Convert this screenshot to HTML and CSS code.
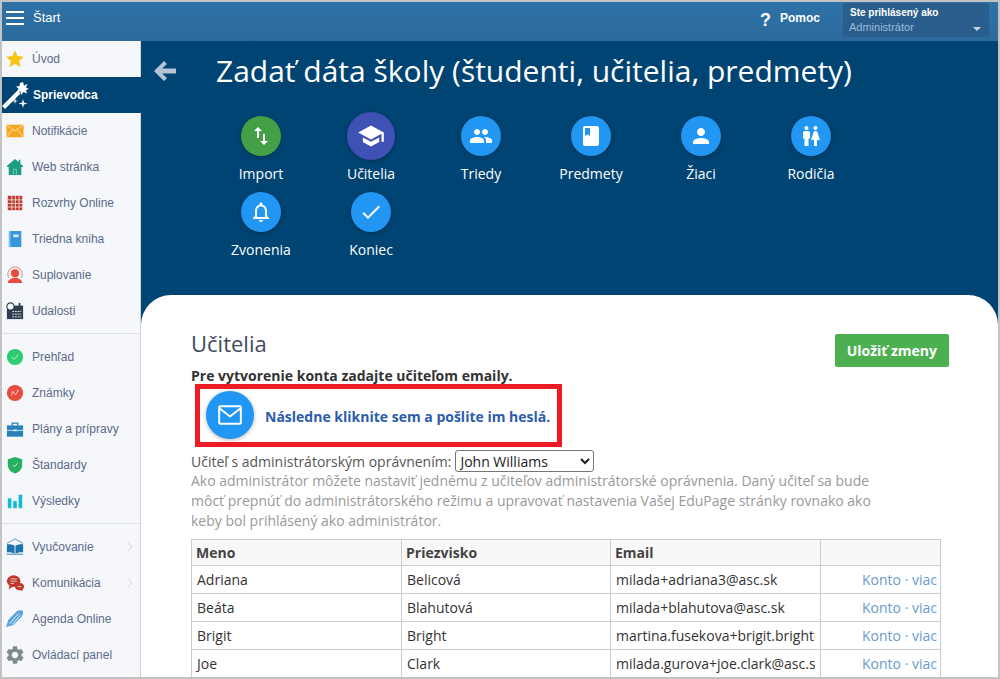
FILE: index.html
```html
<!DOCTYPE html>
<html lang="en">
<head>
    <meta charset="UTF-8">
    <meta name="viewport" content="width=device-width, initial-scale=1.0">
    <title>Zadať dáta školy</title>
    <link rel="stylesheet" href="styles.css">
</head>
<body>
    <div class="frame">
        <header class="topbar">
            <div class="hamburger"><span></span><span></span><span></span></div>
            <div class="topbar-title">Štart</div>
            <div class="help-mark">?</div>
            <div class="help-label">Pomoc</div>
            <div class="user-box">
                <div class="user-caption">Ste prihlásený ako</div>
                <div class="user-role">Administrátor<span class="caret"></span></div>
            </div>
        </header>

        <div class="layout">
            <nav class="sidebar">
                <a class="side-item">
                    <svg class="side-icon" viewBox="0 0 20 20"><polygon fill="#f6c514" points="10,0.500 12.900,6.800 19.800,7.500 14.600,12.100 16.100,19 10,15.400 3.900,19 5.400,12.100 0.200,7.500 7.100,6.800"/></svg>
                    Úvod
                </a>
                <a class="side-item side-item-active">
                    <svg class="side-icon-wand" viewBox="0 0 27 27"><path fill="#fff" d="M0 24L15.500 8.500l3 3L3 27z"/><path fill="#fff" d="M21 0l1 3.500 3.500-1.500-1.500 3.500 3 1.500-3 1 1 3.500-3.500-1.500L19 13l-.5-3.500-3.500.5 1.500-3.500L14 4.500l3.500-.5L18 1z"/><path fill="#fff" d="M21 17l.9 3.600 3.600.9-3.600.9L21 26l-.9-3.600-3.600-.9 3.600-.9zM13 16l.6 2.400 2.400.6-2.400.6L13 22l-.6-2.400L10 19l2.400-.6z"/></svg>
                    Sprievodca
                </a>
                <a class="side-item">
                    <svg class="side-icon" viewBox="0 0 20 20"><rect x="0.500" y="3" width="19" height="14" fill="#f5a623"/><path fill="none" stroke="#fde3ac" stroke-width="1" d="M0.500 3l9.500 7 9.500-7M0.500 17l7-8.500M19.500 17l-7-8.500"/></svg>
                    Notifikácie
                </a>
                <a class="side-item">
                    <svg class="side-icon" viewBox="0 0 20 20"><path fill="#1f9c86" d="M10 1L1 9v1h2v9h14v-9h2V9l-3-2.700V2h-2v2.500z"/><rect x="8" y="12" width="4" height="7" fill="#7cc8ba"/><rect x="9" y="13" width="2" height="6" fill="#1f9c86"/></svg>
                    Web stránka
                </a>
                <a class="side-item">
                    <svg class="side-icon" viewBox="0 0 20 20"><rect x="2" y="2" width="16" height="16" fill="#c0392b"/><path fill="none" stroke="#f3d6d2" stroke-width="1" d="M2 6.500h16M2 10.500h16M2 14.500h16M6.500 2v16M10.500 2v16M14.500 2v16"/></svg>
                    Rozvrhy Online
                </a>
                <a class="side-item">
                    <svg class="side-icon" viewBox="0 0 20 20"><rect x="4" y="1" width="13" height="18" rx="1" fill="#3498db"/><rect x="3" y="1" width="2" height="18" fill="#7fbfe9"/><rect x="8" y="5" width="6" height="3" fill="#d6ecfa"/></svg>
                    Triedna kniha
                </a>
                <a class="side-item">
                    <svg class="side-icon" viewBox="0 0 20 20"><path fill="none" stroke="#e9725f" stroke-width="1" d="M3 13a8 8 0 1 1 14 0"/><circle cx="10" cy="8" r="4.500" fill="#e74c3c"/><path fill="#e74c3c" d="M2 19c0-4 4-5 6-6h4c2 1 6 2 6 6z"/></svg>
                    Suplovanie
                </a>
                <a class="side-item">
                    <svg class="side-icon" viewBox="0 0 20 20"><rect x="1" y="4" width="18" height="15" fill="#2c3e50"/><path stroke="#fff" stroke-width="1" stroke-dasharray="2 1" d="M7 10.500h10M7 13.500h10M7 16.500h10"/><circle cx="5" cy="5" r="4" fill="#f5f7fa" stroke="#2c3e50" stroke-width="1.200"/><rect x="14" y="1" width="2" height="4" fill="#2c3e50"/></svg>
                    Udalosti
                </a>
                <div class="side-sep"></div>
                <a class="side-item">
                    <svg class="side-icon" viewBox="0 0 20 20"><circle cx="10" cy="10" r="9" fill="#2ecc71"/><path fill="none" stroke="#d5f5e3" stroke-width="1" d="M6.500 10l2.500 2.800 4.500-5.300"/></svg>
                    Prehľad
                </a>
                <a class="side-item">
                    <svg class="side-icon" viewBox="0 0 20 20"><circle cx="10" cy="10" r="9" fill="#e74c3c"/><path fill="none" stroke="#f9d6d2" stroke-width="1" d="M6 13l1.500-5 3 4 3-4.500M12 6.500l2 1"/></svg>
                    Známky
                </a>
                <a class="side-item">
                    <svg class="side-icon" viewBox="0 0 20 20"><path fill="#2980b9" d="M1 6h18v12.500H1z"/><path fill="none" stroke="#2980b9" stroke-width="1.500" d="M7 6V3.500h6V6"/><path stroke="#d6e9f5" stroke-width="1" d="M1 11.500h7M12 11.500h7"/><rect x="8" y="10.500" width="4" height="2" fill="#d6e9f5"/></svg>
                    Plány a prípravy
                </a>
                <a class="side-item">
                    <svg class="side-icon" viewBox="0 0 20 20"><path fill="#27ae60" d="M10 1l8 2.500V10c0 5-4 8-8 9.500C6 18 2 15 2 10V3.500z"/><path fill="none" stroke="#d5f5e3" stroke-width="1" d="M7.500 10l2 2 3.500-4"/></svg>
                    Štandardy
                </a>
                <a class="side-item">
                    <svg class="side-icon" viewBox="0 0 20 20"><rect x="2" y="7" width="4" height="11" fill="#13bcd4"/><rect x="8" y="10" width="4" height="8" fill="#13bcd4"/><rect x="14" y="3" width="4" height="15" fill="#13bcd4"/></svg>
                    Výsledky
                </a>
                <div class="side-sep"></div>
                <a class="side-item side-item-more">
                    <svg class="side-icon" viewBox="0 0 20 20"><path fill="none" stroke="#4b90c4" stroke-width="1" d="M1 6l9-5 9 5"/><path fill="#2273ad" d="M1 7c3-.5 6 0 8.500 1.500v9C7 16 4 15.500 1 16zM19 7c-3-.5-6 0-8.500 1.500v9c2.500-1.500 5.500-2 8.500-1.500z"/><path stroke="#2273ad" stroke-width="1" d="M1 18h18"/></svg>
                    Vyučovanie
                    <svg class="side-arrow" viewBox="0 0 6 10"><path fill="none" stroke="#cfd4da" stroke-width="1" d="M.5.5L5 5 .5 9.500"/></svg>
                </a>
                <a class="side-item side-item-more">
                    <svg class="side-icon" viewBox="0 0 20 20"><ellipse cx="8.500" cy="8" rx="7.500" ry="6.500" fill="#c0392b"/><path fill="#c0392b" d="M4 12l-1 5 5-3z"/><ellipse cx="15" cy="14" rx="5" ry="4" fill="#c0392b"/><path fill="#c0392b" d="M17 16l2 3-5-1.500z"/><path stroke="#f5d5d1" stroke-width="1" d="M5 5.500h7M5 8h7M5 10.500h4M13 14h4"/></svg>
                    Komunikácia
                    <svg class="side-arrow" viewBox="0 0 6 10"><path fill="none" stroke="#cfd4da" stroke-width="1" d="M.5.5L5 5 .5 9.500"/></svg>
                </a>
                <a class="side-item">
                    <svg class="side-icon" viewBox="0 0 20 20"><path fill="#5aa5de" d="M0 19l2.500-8L12 1.500c2-1.500 6-1.500 7 0 .5 2-.5 5-2 6.500l-9 9z"/><path fill="none" stroke="#f5f7fa" stroke-width="1" d="M4 15L14 4M7 16l9-10"/></svg>
                    Agenda Online
                </a>
                <a class="side-item">
                    <svg class="side-icon" viewBox="2 2 20 20"><path fill="#7f8c8d" d="M19.140 12.940c.04-.3.060-.61.060-.94 0-.32-.02-.64-.07-.94l2.030-1.580c.18-.14.230-.41.120-.61l-1.920-3.320c-.12-.22-.37-.29-.59-.22l-2.390.96c-.5-.38-1.030-.7-1.620-.94l-.36-2.540c-.04-.24-.24-.41-.48-.41h-3.840c-.24 0-.43.170-.47.410l-.36 2.540c-.59.240-1.130.57-1.620.94l-2.390-.96c-.22-.08-.47 0-.59.220L2.740 8.870c-.12.210-.08.470.12.610l2.030 1.580c-.05.300-.09.630-.09.940s.02.640.07.940l-2.030 1.580c-.18.140-.23.410-.12.610l1.920 3.320c.12.220.37.290.59.220l2.390-.96c.5.380 1.030.7 1.620.94l.36 2.540c.05.240.24.410.48.410h3.840c.24 0 .44-.17.47-.41l.36-2.540c.59-.24 1.130-.56 1.620-.94l2.390.96c.22.080.47 0 .59-.22l1.920-3.320c.12-.22.07-.47-.12-.61l-2.010-1.580zM12 15.600c-1.980 0-3.600-1.620-3.600-3.600s1.620-3.600 3.600-3.600 3.600 1.620 3.600 3.600-1.620 3.600-3.600 3.600z"/></svg>
                    Ovládací panel
                </a>
            </nav>

            <main class="main">
                <div class="hero-head">
                    <svg class="back-arrow" viewBox="0 0 22 20"><path fill="#b4c4d4" d="M10 0l3 3-5 4.500h14v5H8l5 4.500-3 3L0 10z"/></svg>
                    <h1>Zadať dáta školy (študenti, učitelia, predmety)</h1>
                </div>

                <div class="steps">
                    <div class="step">
                        <div class="step-circle step-green"><svg viewBox="0 0 24 24"><path d="M16 17.010V10h-2v7.010h-3L15 21l4-3.990h-3zM9 3L5 6.990h3V14h2V6.990h3L9 3z"/></svg></div>
                        <div class="step-label">Import</div>
                    </div>
                    <div class="step">
                        <div class="step-circle step-current"><svg viewBox="0 0 24 24"><path d="M5 13.180v4L12 21l7-3.820v-4L12 17l-7-3.820zM12 3L1 9l11 6 9-4.910V17h2V9L12 3z"/></svg></div>
                        <div class="step-label">Učitelia</div>
                    </div>
                    <div class="step">
                        <div class="step-circle"><svg viewBox="0 0 24 24"><path d="M16 11c1.660 0 2.990-1.340 2.990-3S17.660 5 16 5c-1.660 0-3 1.340-3 3s1.340 3 3 3zm-8 0c1.660 0 2.990-1.340 2.990-3S9.660 5 8 5C6.340 5 5 6.340 5 8s1.340 3 3 3zm0 2c-2.330 0-7 1.170-7 3.500V19h14v-2.500c0-2.330-4.670-3.500-7-3.500zm8 0c-.29 0-.62.020-.97.050 1.160.84 1.970 1.970 1.970 3.450V19h6v-2.500c0-2.330-4.670-3.500-7-3.500z"/></svg></div>
                        <div class="step-label">Triedy</div>
                    </div>
                    <div class="step">
                        <div class="step-circle"><svg viewBox="0 0 24 24"><path d="M18 2H6c-1.100 0-2 .9-2 2v16c0 1.100.9 2 2 2h12c1.100 0 2-.9 2-2V4c0-1.100-.9-2-2-2zM6 4h5v8l-2.500-1.500L6 12V4z"/></svg></div>
                        <div class="step-label">Predmety</div>
                    </div>
                    <div class="step">
                        <div class="step-circle"><svg viewBox="0 0 24 24"><path d="M12 12c2.210 0 4-1.790 4-4s-1.790-4-4-4-4 1.790-4 4 1.790 4 4 4zm0 2c-2.670 0-8 1.340-8 4v2h16v-2c0-2.660-5.330-4-8-4z"/></svg></div>
                        <div class="step-label">Žiaci</div>
                    </div>
                    <div class="step">
                        <div class="step-circle"><svg viewBox="0 0 24 24"><path d="M5.500 22v-7.500H4V9c0-1.100.9-2 2-2h3c1.100 0 2 .9 2 2v5.500H9.500V22h-4zM18 22v-6h3l-2.540-7.630C18.180 7.550 17.420 7 16.560 7h-.12c-.86 0-1.630.55-1.900 1.370L12 16h3v6h3zM7.500 6c1.110 0 2-.89 2-2s-.89-2-2-2-2 .89-2 2 .89 2 2 2zm9 0c1.110 0 2-.89 2-2s-.89-2-2-2-2 .89-2 2 .89 2 2 2z"/></svg></div>
                        <div class="step-label">Rodičia</div>
                    </div>
                    <div class="step">
                        <div class="step-circle"><svg viewBox="0 0 24 24"><path d="M12 22c1.100 0 2-.9 2-2h-4c0 1.100.9 2 2 2zm6-6v-5c0-3.070-1.630-5.640-4.500-6.320V4c0-.83-.67-1.500-1.500-1.500s-1.500.67-1.500 1.500v.68C7.640 5.360 6 7.920 6 11v5l-2 2v1h16v-1l-2-2zm-2 1H8v-6c0-2.480 1.510-4.500 4-4.500s4 2.020 4 4.500v6z"/></svg></div>
                        <div class="step-label">Zvonenia</div>
                    </div>
                    <div class="step">
                        <div class="step-circle"><svg viewBox="0 0 24 24"><path d="M9 16.170L4.830 12l-1.420 1.410L9 19 21 7l-1.410-1.410z"/></svg></div>
                        <div class="step-label">Koniec</div>
                    </div>
                </div>

                <section class="card">
                    <div class="card-head">
                        <h2>Učitelia</h2>
                        <button class="btn-save">Uložiť zmeny</button>
                    </div>
                    <p class="lead">Pre vytvorenie konta zadajte učiteľom emaily.</p>
                    <div class="mail-row">
                        <div class="mail-circle"><svg viewBox="0 0 24 24"><path fill="none" stroke="#fff" stroke-width="1.800" d="M2.900 4h18.200c.5 0 .9.400.9.900v14.200c0 .5-.4.900-.9.900H2.900c-.5 0-.9-.4-.9-.9V4.900c0-.5.400-.9.900-.9zM2.500 6L12 13.500 21.500 6"/></svg></div>
                        <a class="mail-link">Následne kliknite sem a pošlite im heslá.</a>
                        <div class="red-box"></div>
                    </div>
                    <div class="admin-row">
                        <label for="admin-select">Učiteľ s administrátorským oprávnením:</label>
                        <select id="admin-select"><option>John Williams</option></select>
                    </div>
                    <p class="admin-note">Ako administrátor môžete nastaviť jednému z učiteľov administrátorské oprávnenia. Daný učiteľ sa bude môcť prepnúť do administrátorského režimu a upravovať nastavenia Vašej EduPage stránky rovnako ako keby bol prihlásený ako administrátor.</p>

                    <table class="teachers">
                        <thead>
                            <tr><th>Meno</th><th>Priezvisko</th><th>Email</th><th></th></tr>
                        </thead>
                        <tbody>
                            <tr><td>Adriana</td><td>Belicová</td><td><div class="clip">milada+adriana3@asc.sk</div></td><td class="links">Konto · viac</td></tr>
                            <tr><td>Beáta</td><td>Blahutová</td><td><div class="clip">milada+blahutova@asc.sk</div></td><td class="links">Konto · viac</td></tr>
                            <tr><td>Brigit</td><td>Bright</td><td><div class="clip">martina.fusekova+brigit.bright@asc.sk</div></td><td class="links">Konto · viac</td></tr>
                            <tr><td>Joe</td><td>Clark</td><td><div class="clip">milada.gurova+joe.clark@asc.sk</div></td><td class="links">Konto · viac</td></tr>
                        </tbody>
                    </table>
                </section>
            </main>
        </div>
    </div>
</body>
</html>
```

FILE: styles.css
```css
* {
    box-sizing: border-box;
}

body {
    margin: 0;
    padding: 0;
    font-family: "Open Sans", Arial, sans-serif;
    font-size: 14px;
    background-color: #fff;
}

.frame {
    display: flex;
    flex-direction: column;
    height: 679px;
    border: 2px solid #c3c3c3;
    overflow: hidden;
}

/* top bar */
.topbar {
    display: flex;
    align-items: center;
    flex: none;
    height: 39px;
    padding: 0 9px 8px 4px;
    background: linear-gradient(to bottom, #2e72a8, #2c6a9c);
    color: #fff;
    font-family: "Liberation Sans", Arial, sans-serif;
}

.hamburger {
    display: flex;
    flex-direction: column;
    gap: 3px;
    width: 18px;
    margin-top: 2px;
}

.hamburger span {
    height: 2px;
    margin-bottom: 1px;
    background-color: #fff;
}

.topbar-title {
    margin-left: 9px;
    font-size: 13px;
}

.help-mark {
    margin-left: auto;
    margin-top: 6px;
    font-size: 18px;
    font-weight: bold;
}

.help-label {
    margin-left: 9px;
    font-size: 12px;
    font-weight: bold;
}

.user-box {
    width: 146px;
    height: 34px;
    margin-left: 23px;
    margin-top: 5px;
    padding: 3px 6px;
    background-color: #2a5f8d;
    border-radius: 2px;
}

.user-caption {
    margin-left: 1px;
    font-size: 10px;
    font-weight: bold;
    line-height: 14px;
}

.user-role {
    display: flex;
    justify-content: space-between;
    align-items: center;
    color: #9dbcdc;
    font-size: 11px;
    line-height: 14px;
}

.caret {
    width: 0;
    height: 0;
    margin-right: 2px;
    margin-top: 3px;
    border-left: 4px solid transparent;
    border-right: 4px solid transparent;
    border-top: 4px solid #c8d2dc;
}

.layout {
    display: flex;
    flex: 1;
    min-height: 0;
}

/* sidebar */
.sidebar {
    flex: none;
    width: 139px;
    background-color: #f5f7fa;
    border-right: 1px solid #cfd2d6;
    font-family: "Liberation Sans", Arial, sans-serif;
    font-size: 12px;
    color: #5c6b8a;
}

.side-item {
    display: flex;
    align-items: center;
    height: 36px;
    padding-left: 4px;
    gap: 8px;
}

.side-item-active {
    margin-right: -1px;
    background-color: #004473;
    color: #fff;
    font-weight: bold;
}

.side-item-more {
    position: relative;
}

.side-icon {
    flex: none;
    width: 18px;
    height: 18px;
}

.side-icon-wand {
    flex: none;
    width: 27px;
    height: 27px;
    margin-left: -4px;
    margin-right: -4px;
}

.side-arrow {
    position: absolute;
    left: 125px;
    top: 13px;
    width: 6px;
    height: 10px;
}

.side-sep {
    height: 10px;
    padding-top: 4px;
}

.side-sep::before {
    content: "";
    display: block;
    height: 1px;
    background-color: #dcdfe3;
}

/* main */
.main {
    display: flex;
    flex-direction: column;
    flex: 1;
    min-width: 0;
    overflow: hidden;
    background-color: #004473;
}

.hero-head {
    display: flex;
    align-items: center;
    padding: 10px 0 0 13px;
}

.back-arrow {
    flex: none;
    width: 22px;
    height: 20px;
}

h1 {
    margin: 0 0 0 40px;
    color: #fff;
    font-size: 30px;
    font-weight: 400;
    line-height: 40px;
    white-space: nowrap;
}

.steps {
    display: flex;
    flex-wrap: wrap;
    width: 660px;
    margin: 21px 0 31px 65px;
}

.step {
    width: 110px;
    height: 76px;
    text-align: center;
    color: #fff;
}

.step-circle {
    display: flex;
    align-items: center;
    justify-content: center;
    width: 40px;
    height: 40px;
    margin: 4px auto 8px;
    border-radius: 50%;
    background-color: #2196f3;
    box-shadow: 0 1px 4px rgba(0, 0, 0, 0.3);
}

.step-circle svg {
    width: 24px;
    height: 24px;
    fill: #fff;
}

.step-green {
    background-color: #43a047;
}

.step-current {
    width: 48px;
    height: 48px;
    margin: 0 auto 4px;
    background-color: #3f51b5;
}

.step-current svg {
    width: 28px;
    height: 28px;
}

.step-label {
    line-height: 20px;
}

/* card */
.card {
    flex: 1;
    padding: 34px 49px 0 50px;
    background-color: #fff;
    border-radius: 30px 30px 0 0;
    color: #333;
}

.card-head {
    display: flex;
    justify-content: space-between;
    height: 37px;
}

h2 {
    margin: 0;
    color: #3d4b5c;
    font-size: 22px;
    font-weight: 400;
    line-height: 28px;
}

.btn-save {
    height: 33px;
    margin-top: 5px;
    padding: 0 12px;
    border: none;
    border-radius: 2px;
    background-color: #4caf50;
    color: #fff;
    font-family: "Open Sans", Arial, sans-serif;
    font-size: 14px;
    font-weight: 700;
}

.lead {
    margin: 0;
    font-weight: 700;
    line-height: 20px;
}

.mail-row {
    position: relative;
    display: flex;
    align-items: center;
    height: 48px;
    margin-top: 5px;
    padding-left: 15px;
}

.mail-circle {
    display: flex;
    align-items: center;
    justify-content: center;
    flex: none;
    width: 48px;
    height: 48px;
    border-radius: 50%;
    background-color: #2196f3;
    box-shadow: 0 1px 4px rgba(0, 0, 0, 0.3);
}

.mail-circle svg {
    width: 26px;
    height: 26px;
}

.mail-link {
    margin: 2px 0 0 11px;
    color: #2b5cab;
    font-weight: 700;
}

.red-box {
    position: absolute;
    left: 4px;
    top: -7px;
    width: 367px;
    height: 63px;
    border: 5px solid #ed1c24;
}

.admin-row {
    display: flex;
    align-items: center;
    height: 22px;
    margin-top: 11px;
    color: #555;
}

select {
    width: 139px;
    height: 22px;
    margin-left: 4px;
    padding: 0;
    border: 1px solid #767676;
    border-radius: 3px;
    background-color: #fff;
    color: #222;
    font-family: "Open Sans", Arial, sans-serif;
    font-size: 14px;
}

.admin-note {
    width: 700px;
    margin: -1px 0 8px;
    color: #999;
    line-height: 20px;
}

.teachers {
    width: 749px;
    border-collapse: collapse;
    table-layout: fixed;
}

.teachers th,
.teachers td {
    border: 1px solid #ccc;
    white-space: nowrap;
    overflow: hidden;
}

.teachers th {
    width: 210px;
    height: 26px;
    padding: 0 4px;
    background-color: #f8f8f8;
    color: #444;
    font-weight: 700;
    text-align: left;
}

.teachers th:nth-child(2) {
    width: 209px;
}

.teachers th:last-child {
    width: 120px;
}

.teachers td {
    height: 28px;
    padding: 0 5px;
    color: #333;
}

.clip {
    width: 199px;
    overflow: hidden;
}

.teachers td.links {
    padding-right: 3px;
    color: #6a9bcf;
    text-align: right;
}
```
